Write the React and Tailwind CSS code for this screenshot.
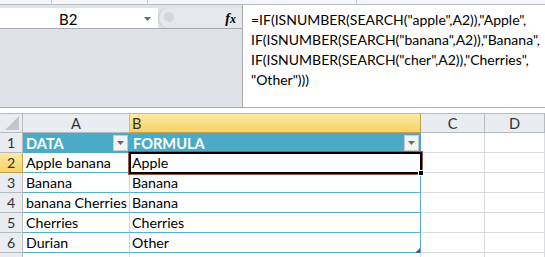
import React from "react";

const font = { fontFamily: "Lato, 'Open Sans', sans-serif" };

function Arrow({ className = "" }) {
  return (
    <svg width="7" height="4" viewBox="0 0 7 4" className={className}>
      <path d="M0 0 H7 L3.5 4 Z" fill="#6b6b6b" />
    </svg>
  );
}

function DropBtn() {
  return (
    <div className="w-[15px] h-[16px] bg-[#f3f3f3] border border-[#c8ccd0] flex items-center justify-center shrink-0">
      <Arrow />
    </div>
  );
}

const rows = [
  ["Apple banana", "Apple"],
  ["Banana", "Banana"],
  ["banana Cherries", "Banana"],
  ["Cherries", "Cherries"],
  ["Durian", "Other"],
];

export default function App() {
  return (
    <div className="w-[545px] h-[257px] overflow-hidden bg-white text-black relative" style={font}>
      {/* ribbon bottom strip */}
      <div className="h-[5px] bg-[#f4f6f9] border-b border-[#b9bec6] flex">
        <div className="w-[52px] border-r border-[#c9ced6] shrink-0" />
        <div className="w-[96px] border-r border-[#c9ced6] shrink-0" />
        <div className="w-[209px] border-r border-[#c9ced6] shrink-0" />
      </div>
      {/* formula bar */}
      <div className="flex h-[103px] border-b border-[#a7abb0]">
        <div className="w-[242px] shrink-0 bg-[#dfe2e7] flex flex-col">
          <div className="h-[3px]" />
          <div className="flex h-[21px] border-b border-[#a7abb0]">
            <div className="w-[158px] shrink-0 bg-white relative">
              <span className="absolute left-[59px] top-[1px] text-[15px] leading-[20px]">B2</span>
              <Arrow className="absolute left-[144px] top-[9px]" />
            </div>
            <div className="flex-1 bg-[#e6e8ec] rounded-l-[11px] border-l border-[#c0c4c9] relative">
              <div className="absolute left-[5px] top-[4px] w-[10px] h-[10px] rounded-full bg-[#d3d6db]" />
              <span className="absolute right-[6px] top-[0px] italic font-bold text-[14px]" style={{ fontFamily: "'Liberation Serif', serif" }}>
                f<span className="text-[12px]">x</span>
              </span>
            </div>
          </div>
        </div>
        <div className="flex-1 min-w-0 border-l border-[#a7abb0] bg-white pl-[8px] pt-[5px] text-[14px] leading-[20px] whitespace-pre overflow-hidden">
          {'=IF(ISNUMBER(SEARCH("apple",A2)),"Apple",\nIF(ISNUMBER(SEARCH("banana",A2)),"Banana",\nIF(ISNUMBER(SEARCH("cher",A2)),"Cherries",\n"Other")))'}
        </div>
      </div>
      <div className="h-[5px] bg-white" />
      {/* grid */}
      <div className="grid grid-cols-[23px_107px_291px_64px_60px] grid-rows-[20px_20px_20px_20px_20px_20px_20px_20px] text-[14.2px] leading-[19px] relative">
        {/* header row */}
        <div className="bg-[#e9ecf0] border-r border-b border-[#b6bbc2] border-t border-t-[#b6bbc2] relative overflow-hidden">
          <svg width="14" height="14" viewBox="0 0 14 14" className="absolute right-[3px] bottom-[2px]">
            <path d="M14 0 V14 H0 Z" fill="#c3c7cc" />
          </svg>
        </div>
        <div className="bg-[#e9ecf0] border-r border-b border-t border-[#b6bbc2] flex items-center justify-center text-[#333] text-[14.6px]">A</div>
        <div className="bg-gradient-to-b from-[#fde9a6] to-[#f8d462] border-r border-b border-t border-t-[#b6bbc2] border-r-[#c2a24c] border-b-[#c2a24c] flex items-center pl-[2px] text-[#333] text-[14.6px]">B</div>
        <div className="bg-[#e9ecf0] border-r border-b border-t border-[#b6bbc2] flex items-center justify-center text-[#333] text-[14.6px]">C</div>
        <div className="bg-[#e9ecf0] border-r border-b border-t border-[#b6bbc2] flex items-center justify-center text-[#333] text-[14.6px]">D</div>

        {/* row 1 */}
        <div className="bg-[#e9ecf0] border-r border-b border-[#b6bbc2] flex items-center justify-center text-[#333]">1</div>
        <div className="bg-[#4babc6] border-r border-[#4babc6] flex items-center justify-between pl-[3px] pr-[1px] text-white font-bold text-[14.6px]">
          <span>DATA</span>
          <DropBtn />
        </div>
        <div className="bg-[#4babc6] flex items-center justify-between pl-[3px] pr-[1px] text-white font-bold border-r border-[#4babc6] text-[14.6px]">
          <span>FORMULA</span>
          <DropBtn />
        </div>
        <div className="border-r border-b border-[#dadcdd]" />
        <div className="border-r border-b border-[#dadcdd]" />

        {rows.map(([a, b], i) => (
          <React.Fragment key={i}>
            <div
              className={
                i === 0
                  ? "bg-gradient-to-b from-[#fde9a6] to-[#f8d462] border-r border-b border-r-[#c2a24c] border-b-[#c2a24c] flex items-center justify-center text-[#333]"
                  : "bg-[#e9ecf0] border-r border-b border-[#b6bbc2] flex items-center justify-center text-[#333]"
              }
            >
              {i + 2}
            </div>
            <div className="border-b border-b-[#5aaec8] border-r border-r-[#bfd9e2] flex items-center pl-[3px] whitespace-nowrap overflow-hidden">
              {a}
            </div>
            <div className="border-b border-b-[#5aaec8] border-r border-r-[#5aaec8] flex items-center pl-[2px]">
              {b}
            </div>
            <div className="border-r border-b border-[#dadcdd]" />
            <div className="border-r border-b border-[#dadcdd]" />
          </React.Fragment>
        ))}

        {/* row 7 partial */}
        <div className="bg-[#e9ecf0] border-r border-[#b6bbc2]" />
        <div className="border-r border-[#dadcdd]" />
        <div className="border-r border-[#dadcdd]" />
        <div className="border-r border-[#dadcdd]" />
        <div className="border-r border-[#dadcdd]" />

        {/* selection */}
        <div className="absolute left-[129px] top-[39px] w-[293px] h-[22px] border-2 border-black shadow-[0_0_0_1px_#9c5b45] pointer-events-none" />
        <div className="absolute left-[418px] top-[57px] w-[6px] h-[6px] bg-black border border-white" />
        {/* table resize handle */}
        <svg width="5" height="5" viewBox="0 0 5 5" className="absolute left-[415px] top-[135px]">
          <path d="M5 0 V5 H0 Z" fill="#3a5fb0" />
        </svg>
      </div>
    </div>
  );
}
